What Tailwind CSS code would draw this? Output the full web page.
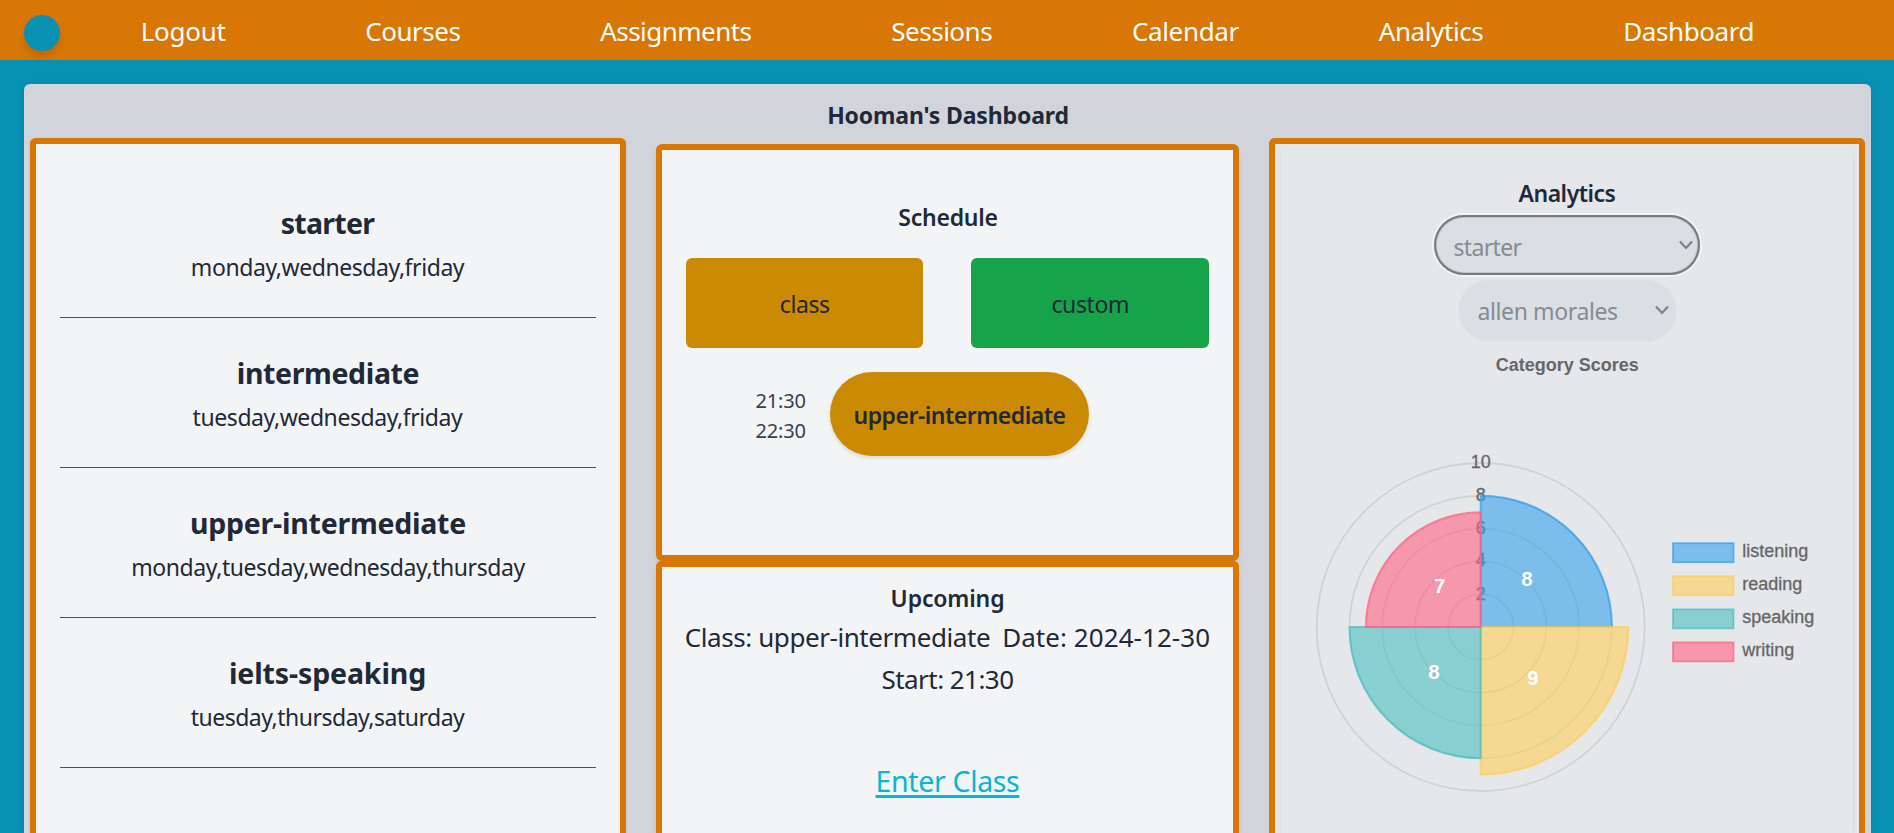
<!DOCTYPE html>
<html lang="en">
<head>
<meta charset="utf-8">
<title>Hooman's Dashboard</title>
<script src="https://cdn.jsdelivr.net/npm/@tailwindcss/browser@4"></script>
</head>
<body class="flex h-screen flex-col overflow-hidden bg-[#0891b2] font-['Noto_Sans','Open_Sans',sans-serif] text-[#1f2937]">
  <nav class="relative flex h-[60px] shrink-0 items-center justify-evenly bg-[#d97706] pl-px pt-[2px] text-[26px] leading-9 text-white">
    <div class="absolute left-[24px] top-[15px] size-9 rounded-full bg-[#0891b2] shadow-[0_6px_9px_rgba(0,0,0,0.12)]"></div>
    <a class="tracking-[-0.3px]">Logout</a>
    <a class="tracking-[-0.5px]">Courses</a>
    <a class="tracking-[-0.53px]">Assignments</a>
    <a class="tracking-[-0.5px]">Sessions</a>
    <a class="tracking-[-0.35px]">Calendar</a>
    <a class="tracking-[-0.4px]">Analytics</a>
    <a class="tracking-[-0.4px]">Dashboard</a>
  </nav>

  <main class="mx-auto mt-6 flex min-h-0 w-[1847px] flex-1 flex-col rounded-t-md bg-[#d1d5db] px-1.5 pt-[13px] shadow-[0_0_6px_rgba(0,0,0,0.1)]">
    <h1 class="pl-[2px] text-center text-[23px] font-bold leading-9 tracking-[-0.15px]">Hooman's Dashboard</h1>
    <div class="mt-[5px] flex min-h-0 flex-1 gap-[30px]">

      <section class="w-[596px] rounded-t-md border-6 border-b-0 border-[#d97706] bg-[#f3f4f6] px-6 pt-6 text-center shadow-sm">
        <div class="h-[150px] border-b border-[#be185d] pt-[37px]">
          <h2 class="text-[28.5px] font-bold leading-9 tracking-[-0.75px]">starter</h2>
          <p class="mt-2 text-[23px] leading-9 tracking-[-0.43px]">monday,wednesday,friday</p>
        </div>
        <div class="h-[150px] border-b border-[#be185d] pt-[37px]">
          <h2 class="pl-px text-[28.5px] font-bold leading-9 tracking-[-0.38px]">intermediate</h2>
          <p class="mt-2 text-[23px] leading-9 tracking-[-0.43px]">tuesday,wednesday,friday</p>
        </div>
        <div class="h-[150px] border-b border-[#be185d] pt-[37px]">
          <h2 class="pl-px text-[28.5px] font-bold leading-9 tracking-[-0.25px]">upper-intermediate</h2>
          <p class="mt-2 pl-px text-[23px] leading-9 tracking-[-0.43px]">monday,tuesday,wednesday,thursday</p>
        </div>
        <div class="h-[150px] border-b border-[#be185d] pt-[37px]">
          <h2 class="text-[28.5px] font-bold leading-9 tracking-[-0.13px]">ielts-speaking</h2>
          <p class="mt-2 text-[23px] leading-9 tracking-[-0.5px]">tuesday,thursday,saturday</p>
        </div>
      </section>

      <div class="mt-1.5 flex w-[583px] flex-col">
        <section class="h-[417px] shrink-0 rounded-md border-6 border-[#d97706] bg-[#f3f4f6] px-6 pt-[49px] shadow-md">
          <h2 class="pl-[2px] text-center text-[23px] font-semibold leading-9 tracking-[-0.25px]">Schedule</h2>
          <div class="mt-[23px] flex gap-12">
            <div class="flex h-[90px] flex-1 items-center justify-center rounded-md bg-[#ca8a04] pl-px pt-[2px] text-[23px] leading-9 tracking-[-0.4px]">class</div>
            <div class="flex h-[90px] flex-1 items-center justify-center rounded-md bg-[#16a34a] pl-px pt-[2px] text-[23px] leading-9 tracking-[-0.4px]">custom</div>
          </div>
          <div class="mt-6 flex items-center gap-6 pl-[69px]">
            <div class="w-[51px] pl-px pt-[3px] text-center text-[20px] leading-[30px] tracking-[-0.15px] text-[#374151]">
              <p>21:30</p>
              <p>22:30</p>
            </div>
            <div class="flex h-[84px] w-[259px] items-center justify-center rounded-full bg-[#ca8a04] pl-px pt-[2px] text-[23px] font-semibold leading-9 tracking-[-0.5px] shadow-[0_2px_4px_rgba(0,0,0,0.12)]">upper-intermediate</div>
          </div>
        </section>
        <section class="min-h-0 flex-1 rounded-t-md border-6 border-b-0 border-[#d97706] bg-[#f3f4f6] pl-px pt-[13px] text-center shadow-md">
          <h2 class="text-[23px] font-semibold leading-9 tracking-[-0.15px]">Upcoming</h2>
          <div class="text-[26px] leading-[42px]">
            <p class="flex justify-center gap-3"><span class="tracking-[-0.43px]">Class: upper-intermediate</span><span class="tracking-[0.06px]">Date: 2024-12-30</span></p>
            <p class="tracking-[-0.55px]">Start: 21:30</p>
          </div>
          <a class="mt-[60px] inline-block text-[28.5px] leading-[42px] tracking-[-0.35px] text-[#06b6d4] underline decoration-[3px] underline-offset-[3px]">Enter Class</a>
        </section>
      </div>

      <section class="w-[596px] rounded-t-md border-6 border-b-0 border-[#d97706] bg-[#e5e7eb] px-1.5 pt-1.5">
        <div class="flex h-full flex-col items-center bg-[#e5e7eb] pt-[25px] shadow-[0_1px_4px_rgba(0,0,0,0.08)]">
          <h2 class="pl-px text-[23px] font-semibold leading-9 tracking-[-0.5px]">Analytics</h2>
          <div class="mt-1 flex h-[60px] w-[266px] shrink-0 items-center justify-between rounded-full bg-[#dbdee3] pl-5 pr-[7px] text-[23px] tracking-[-0.65px] text-[#868b94] shadow-[inset_0_0_0_2px_#7a7b7e,inset_0_0_0_3px_#c3c5c9,0_0_0_2px_#f3f4f5]">
            <span class="pt-[3px] leading-9">starter</span>
            <svg class="h-[10px] w-[14px]" viewBox="0 0 14 10" fill="none" stroke="#7c818a" stroke-width="2.2"><path d="M1 1.5 7 8l6-6.5"/></svg>
          </div>
          <div class="ml-px mt-[5px] flex h-[60px] w-[217px] shrink-0 items-center justify-between rounded-full bg-[#dbdee3] pl-[19px] pr-[7px] text-[23px] tracking-[-0.39px] text-[#868b94] shadow-[0_1px_3px_rgba(0,0,0,0.05)]">
            <span class="pt-[2px] leading-9">allen morales</span>
            <svg class="h-[10px] w-[14px]" viewBox="0 0 14 10" fill="none" stroke="#7c818a" stroke-width="2.2"><path d="M1 1.5 7 8l6-6.5"/></svg>
          </div>
          <!-- Polar area chart -->
          <svg class="min-h-0 w-[572px] flex-1 font-['Liberation_Sans',Arial,sans-serif]" viewBox="1281 340 572 493" preserveAspectRatio="xMidYMin slice" font-size="18" fill="#666">
            <text x="1567.2" y="371" text-anchor="middle" font-weight="700">Category Scores</text>
            <g fill="none" stroke="#000" stroke-opacity="0.09" stroke-width="1.8">
              <circle cx="1480.7" cy="627" r="32.8"/>
              <circle cx="1480.7" cy="627" r="65.6"/>
              <circle cx="1480.7" cy="627" r="98.4"/>
              <circle cx="1480.7" cy="627" r="131.2"/>
              <circle cx="1480.7" cy="627" r="164"/>
            </g>
            <g text-anchor="middle" stroke="#666" stroke-width="0.3">
              <text x="1480.7" y="468.3">10</text>
              <text x="1480.7" y="501">8</text>
              <text x="1480.7" y="533.7">6</text>
              <text x="1480.7" y="566.3">4</text>
              <text x="1480.7" y="599.7">2</text>
            </g>
            <g stroke-width="2" fill-opacity="0.6" stroke-opacity="0.75" stroke-linejoin="round">
              <path d="M1480.7 627V495.8A131.2 131.2 0 0 1 1611.9 627Z" fill="#36a2eb" stroke="#36a2eb"/>
              <path d="M1480.7 627H1628.3A147.6 147.6 0 0 1 1480.7 774.6Z" fill="#ffce56" stroke="#ffce56"/>
              <path d="M1480.7 627V758.2A131.2 131.2 0 0 1 1349.5 627Z" fill="#4bc0c0" stroke="#4bc0c0"/>
              <path d="M1480.7 627H1365.9A114.8 114.8 0 0 1 1480.7 512.2Z" fill="#ff6384" stroke="#ff6384"/>
            </g>
            <g fill="#fff" font-size="20.5" font-weight="700" text-anchor="middle">
              <text x="1527" y="586">8</text>
              <text x="1533" y="685.3">9</text>
              <text x="1434" y="679.3">8</text>
              <text x="1439.7" y="592.5">7</text>
            </g>
            <g stroke-width="1.8" fill-opacity="0.6" stroke-opacity="0.75">
              <rect x="1673" y="543.2" width="60.5" height="19" fill="#36a2eb" stroke="#36a2eb"/>
              <rect x="1673" y="576.2" width="60.5" height="19" fill="#ffce56" stroke="#ffce56"/>
              <rect x="1673" y="609.4" width="60.5" height="19" fill="#4bc0c0" stroke="#4bc0c0"/>
              <rect x="1673" y="642.4" width="60.5" height="19" fill="#ff6384" stroke="#ff6384"/>
            </g>
            <g stroke="#666" stroke-width="0.3">
              <text x="1742.3" y="557.3">listening</text>
              <text x="1742.3" y="590.3">reading</text>
              <text x="1742.3" y="623.3">speaking</text>
              <text x="1742.3" y="656.3">writing</text>
            </g>
          </svg>
        </div>
      </section>
    </div>
  </main>
</body>
</html>
